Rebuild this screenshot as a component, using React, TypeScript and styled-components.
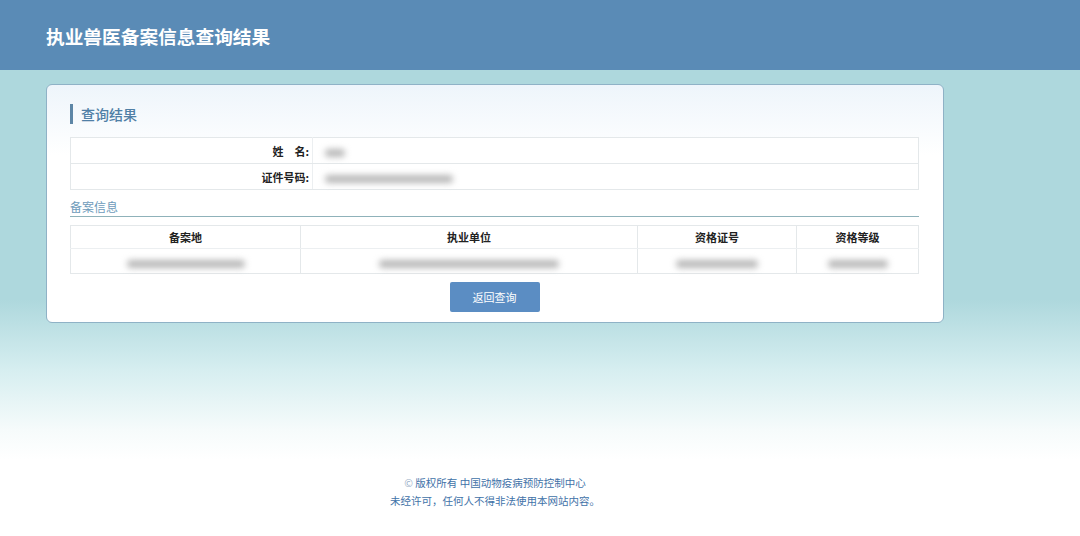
import React from 'react'
import styled, { createGlobalStyle } from 'styled-components'

type Filing = {
  region: number
  unit: number
  certNo: number
  level: number
}

const filings: Filing[] = [{ region: 118, unit: 180, certNo: 82, level: 60 }]

const App: React.FC = () => {
  return (
    <Page>
      <GlobalStyle />
      <Header>
        <HeaderTitle>执业兽医备案信息查询结果</HeaderTitle>
      </Header>
      <Main>
        <Card>
          <SectionTitle>查询结果</SectionTitle>
          <InfoTable>
            <tbody>
              <tr>
                <LabelCell>姓　名:</LabelCell>
                <ValueCell>
                  <Masked style={{ width: 20 }} />
                </ValueCell>
              </tr>
              <tr>
                <LabelCell>证件号码:</LabelCell>
                <ValueCell>
                  <Masked style={{ width: 128 }} />
                </ValueCell>
              </tr>
            </tbody>
          </InfoTable>
          <SubTitle>备案信息</SubTitle>
          <FilingTable>
            <colgroup>
              <col style={{ width: 230 }} />
              <col style={{ width: 337 }} />
              <col style={{ width: 159 }} />
              <col />
            </colgroup>
            <thead>
              <tr>
                <HeadCell>备案地</HeadCell>
                <HeadCell>执业单位</HeadCell>
                <HeadCell>资格证号</HeadCell>
                <HeadCell>资格等级</HeadCell>
              </tr>
            </thead>
            <tbody>
              {filings.map((f, i) => (
                <tr key={i}>
                  <DataCell>
                    <Masked style={{ width: f.region }} />
                  </DataCell>
                  <DataCell>
                    <Masked style={{ width: f.unit }} />
                  </DataCell>
                  <DataCell>
                    <Masked style={{ width: f.certNo }} />
                  </DataCell>
                  <DataCell>
                    <Masked style={{ width: f.level }} />
                  </DataCell>
                </tr>
              ))}
            </tbody>
          </FilingTable>
          <ButtonRow>
            <BackButton>返回查询</BackButton>
          </ButtonRow>
        </Card>
      </Main>
      <Footer>
        <FooterLine>
          <Copy>©</Copy> 版权所有 中国动物疫病预防控制中心
        </FooterLine>
        <FooterLine>未经许可，任何人不得非法使用本网站内容。</FooterLine>
      </Footer>
    </Page>
  )
}

// Styled components
const GlobalStyle = createGlobalStyle`
  html, body {
    margin: 0;
    padding: 0;
    background: #ffffff;
  }
  body {
    font-family: "Noto Sans CJK SC", "Liberation Sans", sans-serif;
  }
`

const Page = styled.div`
  width: 1080px;
  height: 536px;
  overflow: hidden;
  background: linear-gradient(
    to bottom,
    #aed8dd 0px,
    #aed8dd 300px,
    #d6eef0 370px,
    #f6fbfb 430px,
    #ffffff 460px
  );
`

const Header = styled.header`
  height: 70px;
  background: #5a8bb6;
  display: flex;
  align-items: center;
  padding-left: 46px;
`

const HeaderTitle = styled.h1`
  margin: 0;
  color: #ffffff;
  font-size: 18.7px;
  font-weight: 700;
`

const Main = styled.main`
  padding: 14px 0 0 46px;
`

const Card = styled.section`
  width: 898px;
  height: 239px;
  box-sizing: border-box;
  border: 1px solid #8fb2c6;
  border-radius: 6px;
  background: linear-gradient(to bottom, #eef5fb 0px, #ffffff 70px);
  padding: 19px 24px 0 23px;
`

const SectionTitle = styled.h2`
  margin: 0 0 13px;
  height: 20px;
  display: flex;
  align-items: center;
  border-left: 3px solid #5d86a6;
  padding-left: 8px;
  font-size: 14px;
  font-weight: 500;
  color: #4f7fa6;
`

const InfoTable = styled.table`
  width: 100%;
  border-collapse: collapse;
  background: #ffffff;
  border: 1px solid #e4e8ea;

  td {
    border-bottom: 1px solid #e4e8ea;
    height: 25px;
    padding: 0;
  }
`

const LabelCell = styled.td`
  width: 238px;
  text-align: right;
  font-size: 11px;
  font-weight: 700;
  color: #222;
  padding-right: 3px !important;
  border-right: 1px solid #eceff1;
`

const ValueCell = styled.td`
  padding-left: 12px !important;
`

const SubTitle = styled.div`
  margin-top: 9px;
  font-size: 12px;
  color: #6e9bbb;
  line-height: 16px;
  border-bottom: 1px solid #8fb2ba;
  padding-bottom: 1px;
`

const FilingTable = styled.table`
  width: 100%;
  margin-top: 8px;
  border-collapse: collapse;
  table-layout: fixed;
  border: 1px solid #e4e8ea;
  background: #ffffff;
`

const HeadCell = styled.th`
  height: 22px;
  padding: 0;
  font-size: 11px;
  font-weight: 700;
  color: #222;
  border-right: 1px solid #e4e8ea;
  border-bottom: 1px solid #eceff1;
  text-align: center;
`

const DataCell = styled.td`
  height: 24px;
  padding: 0;
  text-align: center;
  border-right: 1px solid #e4e8ea;
`

const Masked = styled.span`
  display: inline-block;
  height: 8px;
  border-radius: 4px;
  background: #b8b8b8;
  filter: blur(3px);
  vertical-align: middle;
`

const ButtonRow = styled.div`
  display: flex;
  justify-content: center;
  margin-top: 8px;
`

const BackButton = styled.button`
  width: 90px;
  height: 30px;
  border: none;
  border-radius: 2px;
  background: #5b8dc3;
  color: #ffffff;
  font-size: 11px;
  font-family: inherit;
  cursor: pointer;

  &:hover {
    background: #4d7fb4;
  }
`

const Footer = styled.footer`
  margin-top: 152px;
  display: flex;
  flex-direction: column;
  align-items: center;
  gap: 2px;
  padding-right: 90px;
`

const FooterLine = styled.div`
  font-size: 10.5px;
  line-height: 16px;
  color: #3f72a8;
`

const Copy = styled.span`
  color: #9ab0c8;
`

export default App
